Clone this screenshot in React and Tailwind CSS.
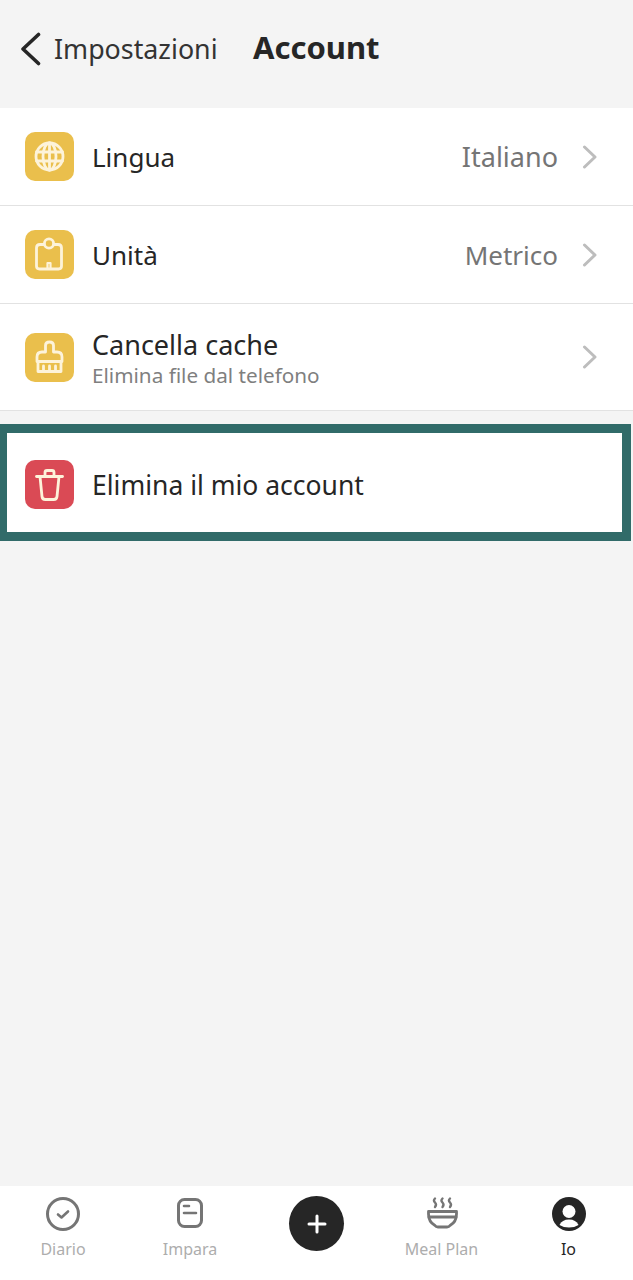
const Y = "bg-[#eabf4c]";

const Chevron = () => (
  <svg width="16" height="24" viewBox="0 0 16 24" fill="none" stroke="#bdbdbd" strokeWidth="3" strokeLinecap="round" strokeLinejoin="round">
    <path d="M2.5 2 L13 12 L2.5 22" />
  </svg>
);

const Tile = ({ color, children }) => (
  <div className={`w-[49px] h-[49px] rounded-[10px] flex items-center justify-center shrink-0 ${color}`}>
    <svg width="49" height="49" viewBox="0 0 49 49" fill="none" stroke="#fdf3da" strokeWidth="2.8" strokeLinecap="round" strokeLinejoin="round">
      {children}
    </svg>
  </div>
);

const Globe = () => (
  <>
    <circle cx="24.5" cy="24.5" r="13.5" />
    <ellipse cx="24.5" cy="24.5" rx="6.5" ry="13.5" />
    <path d="M11.5 20 H37.5 M11.5 29 H37.5 M24.5 11 V38" />
  </>
);

const Scale = () => (
  <>
    <path d="M19 14.5 H15 Q11.5 14.5 11.5 18 V36 Q11.5 39 14.5 39 H33.5 Q36.5 39 36.5 36 V18 Q36.5 14.5 33 14.5 H29" />
    <circle cx="24" cy="13.5" r="4.6" />
    <path d="M22.5 39 V33 H25.5 V39" strokeWidth="2.2" />
  </>
);

const Brush = () => (
  <>
    <path d="M20.5 19 V12.5 Q20.5 9 24.5 9 Q28.5 9 28.5 12.5 V19 H32 Q37 19 37 24 V28.5 H12 V24 Q12 19 17 19 Z" />
    <path d="M13 28.5 V38.5 H36 V28.5" />
    <path d="M18.5 33 V38.5 M24.5 33 V38.5 M30.5 33 V38.5" />
  </>
);

const Trash = () => (
  <>
    <path d="M11.5 16.5 H37.5" />
    <path d="M15 16.5 L17 36.5 Q17.3 39.5 20.3 39.5 H28.7 Q31.7 39.5 32 36.5 L34 16.5" />
    <path d="M20 16.5 V12.5 Q20 10.5 22 10.5 H27 Q29 10.5 29 12.5 V16.5" />
  </>
);

const Row = ({ icon, color = Y, title, titleSize = "text-[26.5px]", sub, value, valueSize = "text-[26.5px]", h = "h-[97px]" }) => (
  <div className={`flex items-center pl-[25px] pr-[35px] bg-white ${h}`}>
    <Tile color={color}>{icon}</Tile>
    <div className={`ml-[18px] flex-1 flex flex-col ${sub ? "pt-[2px]" : "pt-0"}`}>
      <div className={`${titleSize} leading-[34px] text-[#262626]`}>{title}</div>
      {sub && <div className="text-[20.7px] leading-[26px] text-[#7f7f7f]">{sub}</div>}
    </div>
    {value && <div className={`${valueSize} text-[#757575] mr-[24px] pt-[2px]`}>{value}</div>}
    <Chevron />
  </div>
);

const Divider = () => <div className="h-px bg-[#e2e2e2]" />;

const Tab = ({ label, active, w, children }) => (
  <div className={`${w} flex flex-col items-center pt-[10px]`}>
    <svg width="36" height="36" viewBox="0 0 36 36" fill="none" stroke="#757575" strokeWidth="3" strokeLinecap="round" strokeLinejoin="round">
      {children}
    </svg>
    <div className={`mt-[6px] text-[16px] leading-[22px] ${active ? "text-[#262626]" : "text-[#adadad]"}`}>{label}</div>
  </div>
);

export default function App() {
  return (
    <div
      className="w-[633px] h-[1280px] bg-[#f4f4f4] flex flex-col overflow-hidden"
      style={{ fontFamily: '"Noto Sans", "Liberation Sans", sans-serif' }}
    >
      <header className="h-[108px] flex items-start pt-[30px] pl-[20px] shrink-0">
        <svg width="22" height="34" viewBox="0 0 22 34" fill="none" stroke="#262626" strokeWidth="3.6" strokeLinecap="round" strokeLinejoin="round" className="mt-[2px]">
          <path d="M18.5 2.5 L3 17 L18.5 31.5" />
        </svg>
        <div className="ml-[12px] text-[26.8px] leading-[38px] text-[#333333] w-[199px]">Impostazioni</div>
        <div className="text-[31px] leading-[34px] font-bold text-[#262626]">Account</div>
      </header>

      <Row icon={<Globe />} title="Lingua" titleSize="text-[26px]" value="Italiano" valueSize="text-[27px]" />
      <Divider />
      <Row icon={<Scale />} title="Unità" titleSize="text-[26px]" value="Metrico" valueSize="text-[26px]" />
      <Divider />
      <Row icon={<Brush />} title="Cancella cache" titleSize="text-[27px]" sub="Elimina file dal telefono" h="h-[106px]" />
      <Divider />

      <div className="mt-[13px] w-[631px] h-[117px] border-l-[7px] border-r-[9px] border-y-[9px] border-[#316b69] bg-white flex items-center pl-[18px] pt-[4px]">
        <Tile color="bg-[#da4a55]"><Trash /></Tile>
        <div className="ml-[18px] pt-[3px] text-[26.5px] text-[#262626]">Elimina il mio account</div>
      </div>

      <div className="flex-1" />

      <nav className="h-[94px] bg-white flex shrink-0">
        <Tab label="Diario" w="w-[126px]">
          <circle cx="18" cy="18" r="15.5" />
          <path d="M13 18.5 L16.5 21.5 L23 15.5" strokeWidth="2.6" />
        </Tab>
        <Tab label="Impara" w="w-[128px]">
          <rect x="6.5" y="3.5" width="23" height="27" rx="6" />
          <path d="M12 10 H17 M12 17 H24" strokeWidth="2.6" />
        </Tab>
        <div className="w-[125px] flex justify-center pt-[10px]">
          <div className="w-[55px] h-[55px] rounded-full bg-[#262626] flex items-center justify-center">
            <svg width="20" height="20" viewBox="0 0 20 20" stroke="#ffffff" strokeWidth="3" strokeLinecap="round">
              <path d="M10 2 V18 M2 10 H18" />
            </svg>
          </div>
        </div>
        <Tab label="Meal Plan" w="w-[125px]">
          <path d="M4.5 15.5 H32.5 V18 Q32.5 26 26 29.5 Q25 31 23 31 H14 Q12 31 11 29.5 Q4.5 26 4.5 18 Z" strokeWidth="2.8" />
          <path d="M5 21 H32" strokeWidth="2.8" />
          <path d="M11 2.5 Q9 4.5 11 6.5 Q13 8.5 11 11 M18.5 2.5 Q16.5 4.5 18.5 6.5 Q20.5 8.5 18.5 11 M26 2.5 Q24 4.5 26 6.5 Q28 8.5 26 11" strokeWidth="2.4" />
        </Tab>
        <Tab label="Io" active w="w-[129px]">
          <circle cx="18" cy="18" r="17" fill="#262626" stroke="none" />
          <circle cx="18" cy="15.5" r="6.5" fill="#ffffff" stroke="none" />
          <path d="M8.5 29 Q11 23.5 18 23.5 Q25 23.5 27.5 29 Q23.5 31.5 18 31.5 Q12.5 31.5 8.5 29 Z" fill="#ffffff" stroke="none" />
        </Tab>
      </nav>
    </div>
  );
}
